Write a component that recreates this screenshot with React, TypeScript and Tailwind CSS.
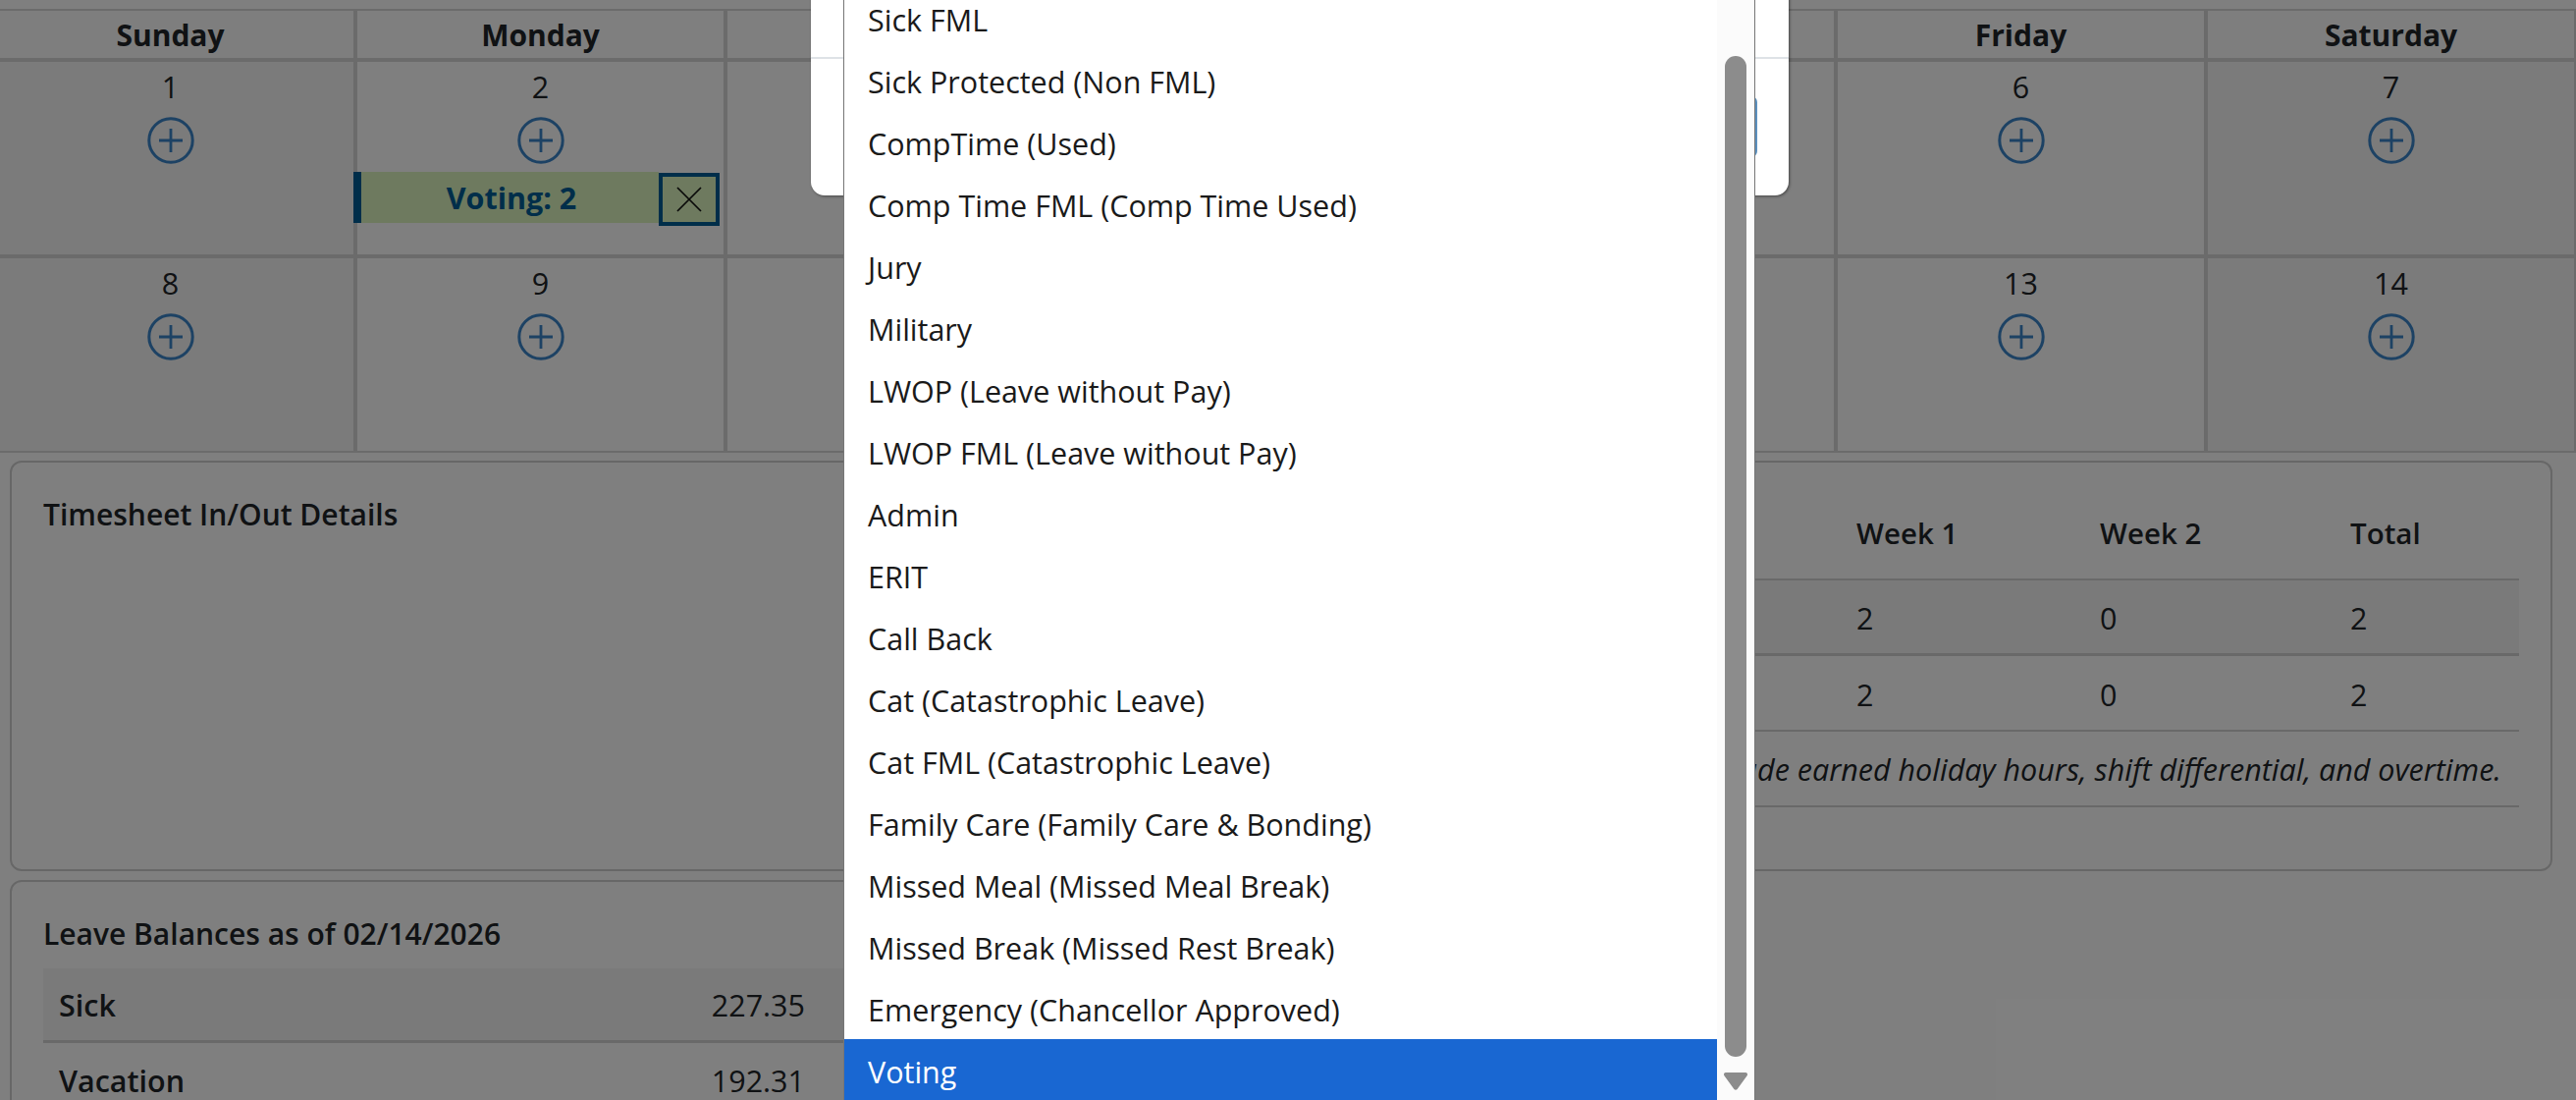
const F = "[font-family:'Open_Sans','Noto_Sans',sans-serif]";

function Plus() {
  return (
    <svg width="48" height="48" viewBox="0 0 48 48" fill="none" stroke="#3a84c8" className="block">
      <circle cx="24" cy="24" r="22.2" strokeWidth="3" />
      <path d="M24 12v24M12 24h24" strokeWidth="2.8" />
    </svg>
  );
}

function DayCell({ n, weekend, last, hidden, children }: { n: number; weekend?: boolean; last?: boolean; hidden?: boolean; children?: React.ReactNode }) {
  return (
    <div className={`border-r-[4px] border-[#d6d6d6] flex flex-col items-center ${last ? "h-[198px] border-b-[2px]" : "h-[200px] border-b-[4px]"} ${weekend ? "bg-[#f6f6f6]" : ""}`}>
      <div className="h-[50px] flex items-center text-[30.5px] leading-[40px] text-[#212529]">{hidden ? "" : n}</div>
      {hidden ? null : <div className="mt-[6px]"><Plus /></div>}
      {children}
    </div>
  );
}

const options = [
  "Sick FML",
  "Sick Protected (Non FML)",
  "CompTime (Used)",
  "Comp Time FML (Comp Time Used)",
  "Jury",
  "Military",
  "LWOP (Leave without Pay)",
  "LWOP FML (Leave without Pay)",
  "Admin",
  "ERIT",
  "Call Back",
  "Cat (Catastrophic Leave)",
  "Cat FML (Catastrophic Leave)",
  "Family Care (Family Care & Bonding)",
  "Missed Meal (Missed Meal Break)",
  "Missed Break (Missed Rest Break)",
  "Emergency (Chancellor Approved)",
  "Voting",
];

const days = ["Sunday", "Monday", "", "", "", "Friday", "Saturday"];
const cols = "grid grid-cols-[588px_248px_255px_1fr]";

export default function App() {
  return (
    <div className={`relative w-[2624px] h-[1120px] overflow-hidden bg-white ${F} text-[#212529]`}>
      <div className="pt-[9px] -ml-[13px] w-[2639px]">
        <div className="grid grid-cols-7 border-t-[2px] border-[#d6d6d6]">
          {days.map((d, i) => (
            <div
              key={i}
              className={`h-[52px] pt-[2px] border-r-[4px] border-b-[4px] border-[#d6d6d6] flex items-center justify-center text-[30px] leading-[40px] font-bold text-[#212529] ${i === 0 || i === 6 ? "bg-[#fcfcfc]" : ""}`}
            >
              {d}
            </div>
          ))}
          <DayCell n={1} weekend />
          <DayCell n={2}>
            <div className="mt-[8px] -ml-[9px] w-[373px] flex items-start">
              <div className="h-[52px] w-[311px] pl-[4px] bg-[#dcf4be] border-l-[8px] border-[#005c94] flex items-center justify-center text-[30.5px] leading-[40px] font-bold text-[#005c94]">
                Voting: 2
              </div>
              <div className="mt-[1px] h-[54px] w-[62px] border-[4px] border-[#005c94] bg-[#dcf4be] flex items-center justify-center">
                <svg width="26" height="26" viewBox="0 0 26 26" stroke="#111" strokeWidth="1.7" fill="none">
                  <path d="M1 1l24 24M25 1L1 25" />
                </svg>
              </div>
            </div>
          </DayCell>
          <DayCell n={3} hidden />
          <DayCell n={4} hidden />
          <DayCell n={5} hidden />
          <DayCell n={6} />
          <DayCell n={7} weekend />
          <DayCell n={8} weekend last />
          <DayCell n={9} last />
          <DayCell n={10} hidden last />
          <DayCell n={11} hidden last />
          <DayCell n={12} hidden last />
          <DayCell n={13} last />
          <DayCell n={14} weekend last />
        </div>
      </div>

      <div className="mt-[8px] mx-[10px] mr-[24px] flex gap-[10px] items-start">
        <div className="flex-1 flex flex-col gap-[9px]">
          <div className="h-[418px] border-[2px] border-[#cfcfcf] rounded-[12px] pl-[32px] pt-[33px]">
            <div className="text-[30px] font-semibold leading-[40px]">Timesheet In/Out Details</div>
          </div>
          <div className="h-[300px] border-[2px] border-[#cfcfcf] rounded-[12px] pl-[32px] pt-[33px]">
            <div className="text-[30px] font-semibold leading-[40px]">Leave Balances as of 02/14/2026</div>
            <div className="mt-[15px] w-[1200px]">
              <div className="h-[76px] pt-[1px] bg-[#f5f5f5] border-b-[3px] border-[#d3d3d3] flex items-center">
                <div className="w-[776px] pl-[16px] flex justify-between text-[30.5px] leading-[40px]">
                  <span className="font-semibold">Sick</span>
                  <span>227.35</span>
                </div>
              </div>
              <div className="h-[76px] flex items-center">
                <div className="w-[776px] pl-[16px] flex justify-between text-[30.5px] leading-[40px]">
                  <span className="font-semibold">Vacation</span>
                  <span>192.31</span>
                </div>
              </div>
            </div>
          </div>
        </div>
        <div className="flex-1 h-[418px] border-[2px] border-[#cfcfcf] rounded-[12px] -ml-[4px] pl-[22px] pr-[32px] pt-[47px]">
          <div className={`${cols} h-[73px] items-start border-b-[2px] border-[#d3d3d3] text-[29.5px] font-semibold leading-[50px]`}>
            <div />
            <div>Week 1</div>
            <div>Week 2</div>
            <div>Total</div>
          </div>
          <div className={`${cols} h-[77px] pt-[2px] items-center bg-[#f5f5f5] border-b-[3px] border-[#d3d3d3] text-[30.5px] leading-[40px]`}>
            <div />
            <div>2</div>
            <div>0</div>
            <div>2</div>
          </div>
          <div className={`${cols} h-[77px] pt-[2px] items-center border-b-[2px] border-[#d3d3d3] text-[30.5px] leading-[40px]`}>
            <div />
            <div>2</div>
            <div>0</div>
            <div>2</div>
          </div>
          <div className="h-[77px] flex items-center justify-end pr-[18px] border-b-[2px] border-[#d3d3d3] text-[30.5px] leading-[40px] italic whitespace-nowrap">
            Does not include earned holiday hours, shift differential, and overtime.
          </div>
        </div>
      </div>

      <div className="absolute inset-0 bg-black/50" />

      <div className="absolute left-[826px] top-[-100px] w-[996px] h-[299px] bg-white rounded-[14px] shadow-[1px_1px_3px_rgba(0,0,0,0.45)]">
        <div className="absolute left-0 right-0 top-[158px] h-[2px] bg-[#dee2e6]" />
        <div className="absolute right-[32px] top-[198px] h-[62px] w-[300px] rounded-[6px] border-[2px] border-[#5a8fbc]" />
      </div>

      <div className="absolute left-[859px] top-[-13px] w-[929px] h-[1133px] bg-white border-r border-l border-[#767676] flex overflow-hidden">
        <div className="flex-1 flex flex-col">
          {options.map((o) => (
            <div
              key={o}
              className={`h-[63px] shrink-0 flex items-center pl-[24px] pt-[3px] text-[30.5px] leading-[40px] ${o === "Voting" ? "bg-[#1967d2] text-white" : "text-[#1a1a1a]"}`}
            >
              {o}
            </div>
          ))}
        </div>
        <div className="relative w-[38px] bg-[#fbfbfb]">
          <div className="absolute left-[8px] top-[70px] w-[22px] h-[1019px] rounded-[11px] bg-[#8c8c8c]" />
          <svg className="absolute left-[7px] top-[1105px]" width="24" height="18" viewBox="0 0 24 18" fill="#8c8c8c">
            <path d="M2 0h20a2 2 0 0 1 1.6 3.2L13.6 17a2 2 0 0 1-3.2 0L.4 3.2A2 2 0 0 1 2 0z" />
          </svg>
        </div>
      </div>
    </div>
  );
}
